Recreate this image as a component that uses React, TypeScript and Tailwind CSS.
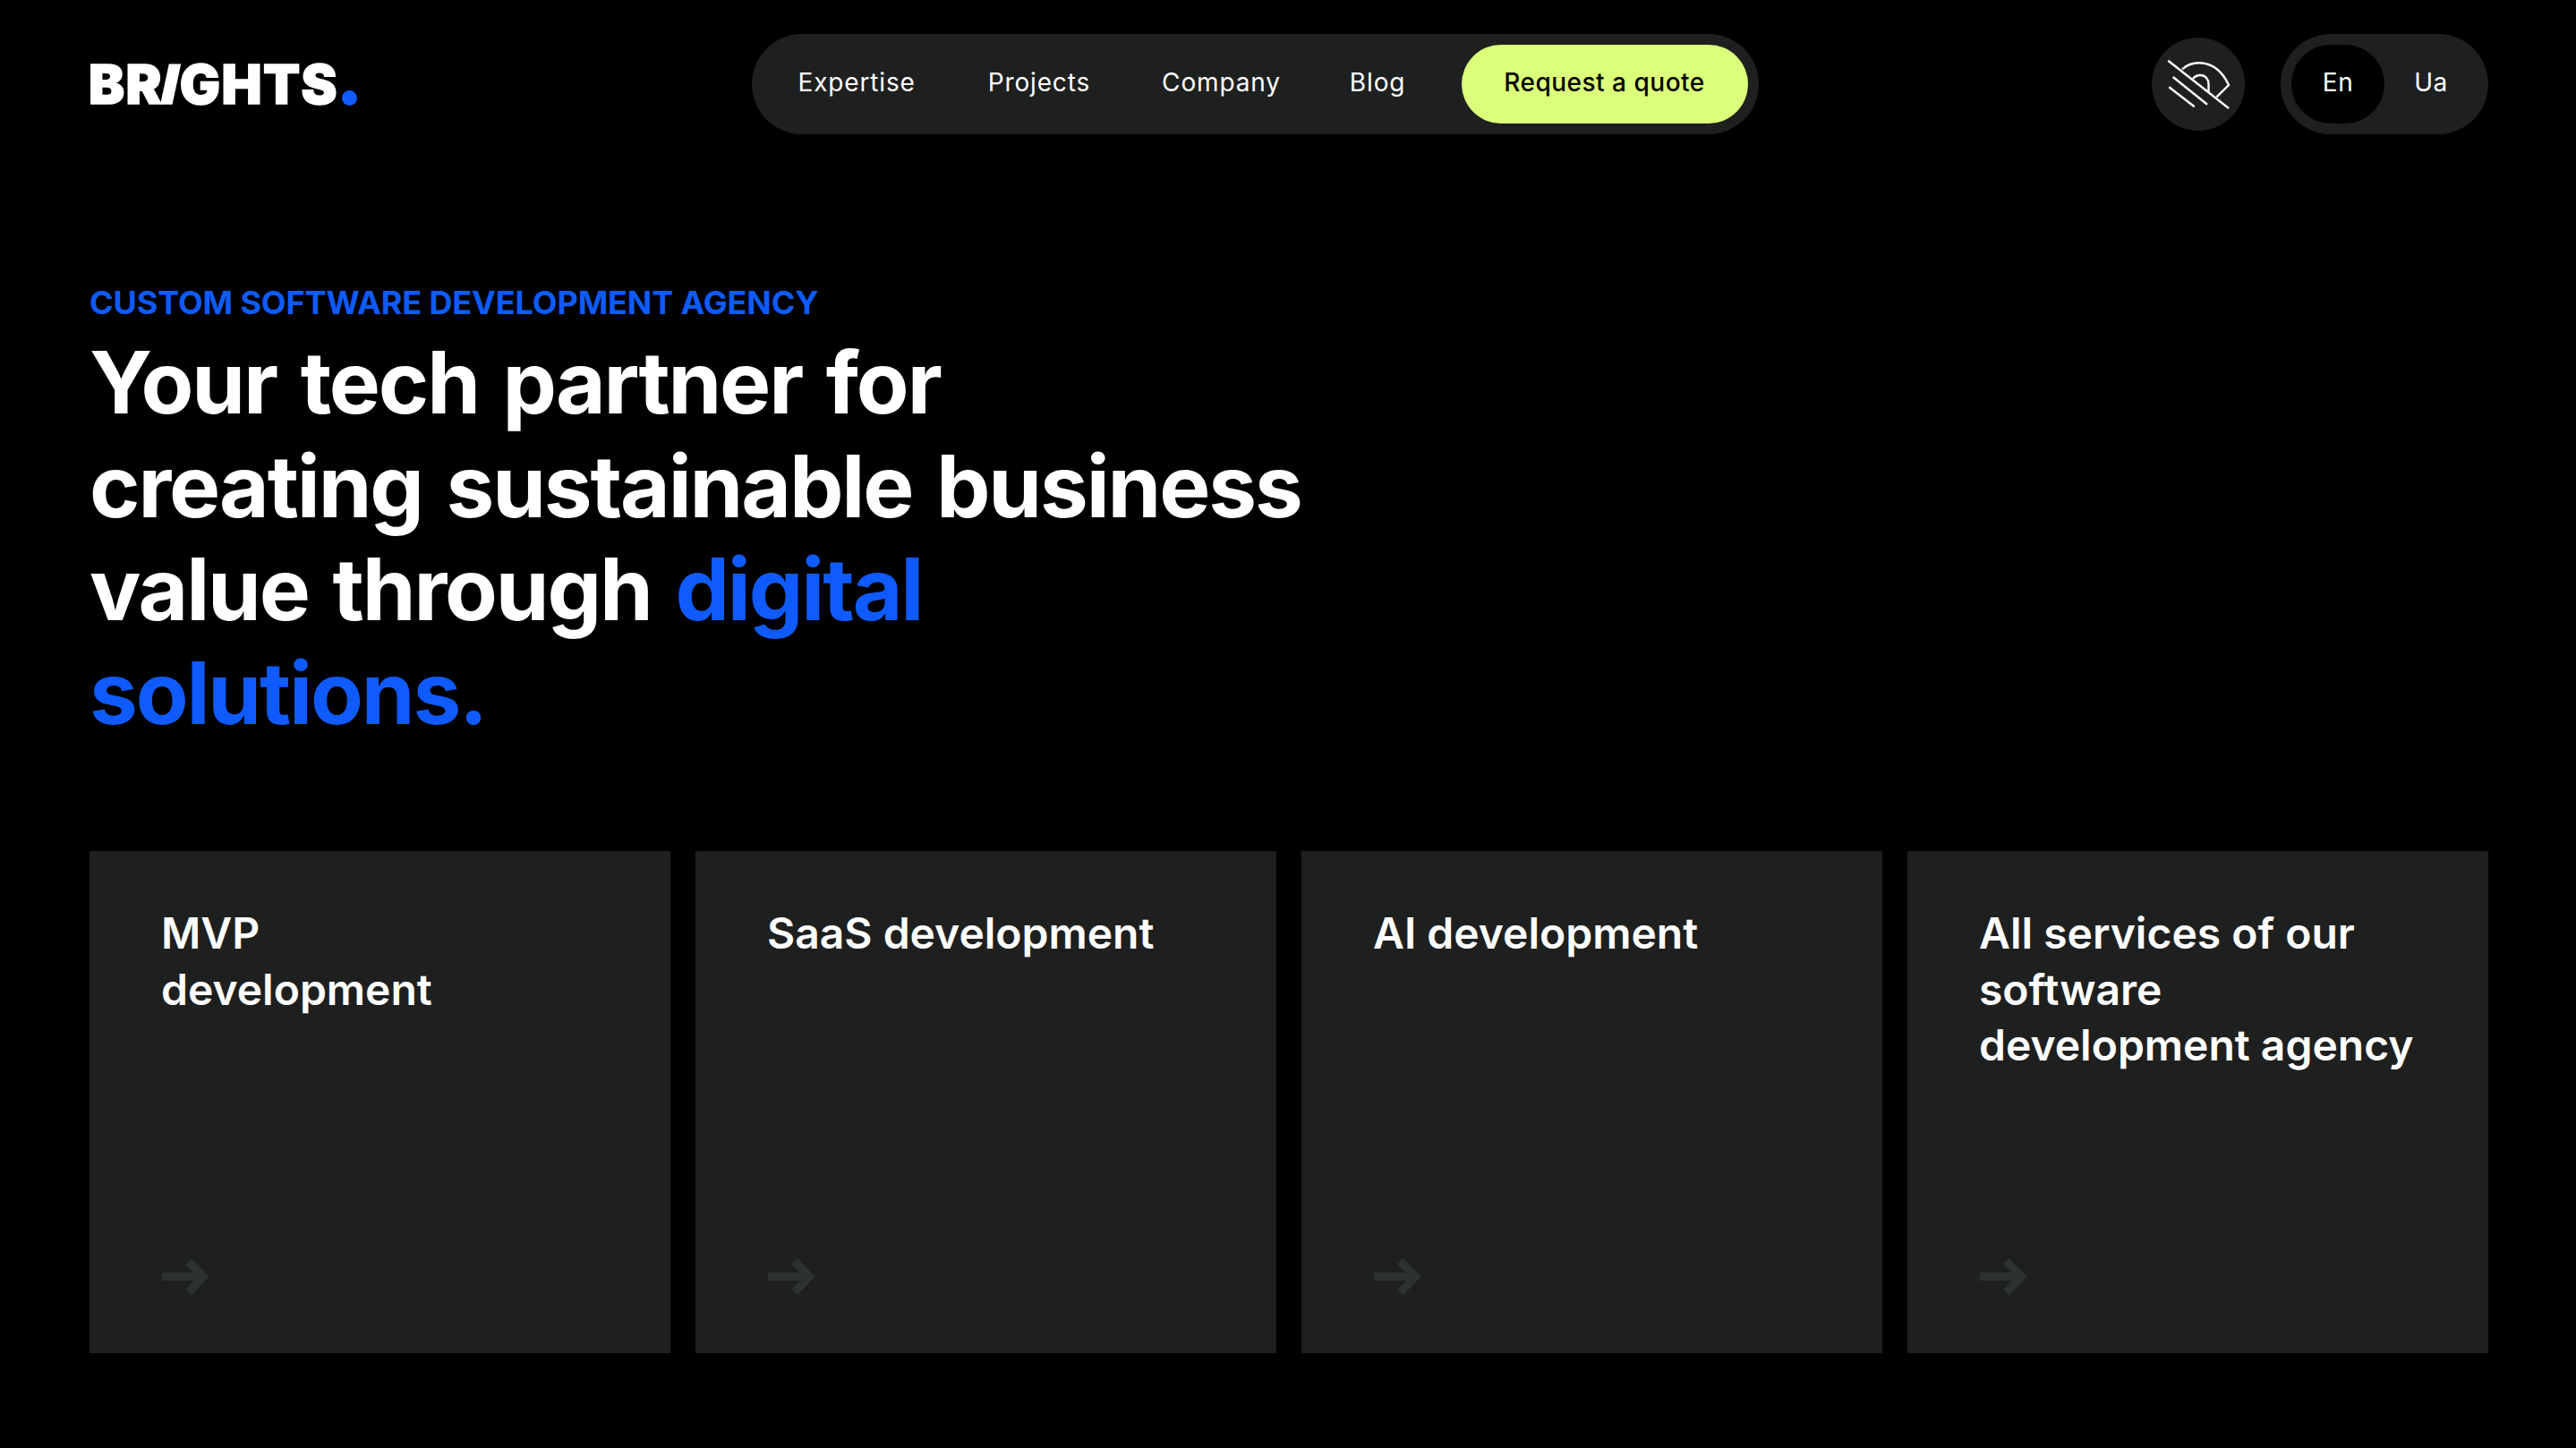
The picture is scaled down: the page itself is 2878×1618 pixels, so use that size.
const inter = "font-['Inter','Liberation_Sans',sans-serif]";

function EyeOff() {
  return (
    <svg width="104" height="104" viewBox="0 0 104 104" fill="none" stroke="#ffffff" strokeWidth="2.4">
      <path d="M18.3 25.7L86 79" />
      <path d="M23.7 44L62 74.7" />
      <path d="M19.3 55.3L47.7 77.3" />
      <path d="M34 35.3C40 30 48 28 54 28.3C68 29 79 38 86 53L72.5 66.3" />
      <path d="M46 46C48 43.5 51 42 54.5 42C60 42 63.5 46.5 63.5 52L63.5 61" />
    </svg>
  );
}

function Arrow() {
  return (
    <svg className="ml-[1px]" width="52" height="42" viewBox="0 0 52 42" fill="none" stroke="#2d3132" strokeWidth="9">
      <path d="M0 20.5H46" />
      <path d="M29.5 3.5L46.5 20.5L29.5 38" />
    </svg>
  );
}

function Card({ title }: { title: React.ReactNode }) {
  return (
    <div className="flex h-[561px] flex-col justify-between bg-[#1e2020] px-[80px] pt-[61px] pb-[64px]">
      <div className="text-[48px] leading-[62.6px] font-semibold text-white">{title}</div>
      <Arrow />
    </div>
  );
}

export default function App() {
  return (
    <div className={`min-h-[1618px] bg-black pt-[38px] pr-[98px] pl-[100px] text-white ${inter}`}>
      <header className="flex items-center justify-between">
        <div className="flex h-[112px] w-[300px] items-center text-[60px] leading-none font-black tracking-[1.4px] text-white [-webkit-text-stroke:1.5px_white]">
          <span className="-ml-[1px]">BR</span>
          <span className="inline-block -skew-x-12">I</span>
          <span>GHTS</span>
          <span className="mt-[31px] ml-[4px] size-[17px] rounded-full bg-[#0f5bff]" />
        </div>
        <nav className="flex h-[112px] w-[1125px] items-center rounded-full bg-[#1e2020] pr-[12px] pl-[52px] text-[28px] tracking-[0.85px]">
          <a className="mr-[81px] -translate-y-[2px]">Expertise</a>
          <a className="mr-[80px] -translate-y-[2px]">Projects</a>
          <a className="mr-[77px] -translate-y-[2px]">Company</a>
          <a className="mr-auto -translate-y-[2px]">Blog</a>
          <a className="flex h-[88px] w-[320px] items-center justify-center rounded-full bg-[#dbff7a] font-medium tracking-[0.5px] text-black">
            <span className="-translate-y-[2px]">Request a quote</span>
          </a>
        </nav>
        <div className="flex w-[376px] items-center justify-between">
          <button className="flex size-[104px] items-center justify-center rounded-full bg-[#1e2020]">
            <EyeOff />
          </button>
          <div className="flex h-[112px] w-[232px] items-center rounded-full bg-[#1e2020] pl-[12px] text-[28px] tracking-[0.5px]">
            <span className="flex h-[88px] w-[104px] items-center justify-center rounded-full bg-black">
              <span className="-translate-y-[2px]">En</span>
            </span>
            <span className="flex w-[104px] -translate-y-[2px] items-center justify-center">Ua</span>
          </div>
        </div>
      </header>

      <main>
        <div className="mt-[166px] text-[36px] leading-[44px] font-bold tracking-[-0.12px] text-[#0f5bff] uppercase">
          Custom software development agency
        </div>
        <h1 className="mt-[10px] w-[1400px] text-[96px] leading-[115.5px] font-[650] tracking-[-2.1px] [word-spacing:6px]">
          Your tech partner for
          <br />
          creating sustainable business
          <br />
          value through <span className="text-[#0f5bff]">digital</span>
          <br />
          <span className="text-[#0f5bff]">solutions.</span>
        </h1>

        <div className="mt-[119px] grid grid-cols-4 gap-[28px]">
          <Card title={<>MVP<br />development</>} />
          <Card title="SaaS development" />
          <Card title="AI development" />
          <Card title="All services of our software development agency" />
        </div>
      </main>
    </div>
  );
}
